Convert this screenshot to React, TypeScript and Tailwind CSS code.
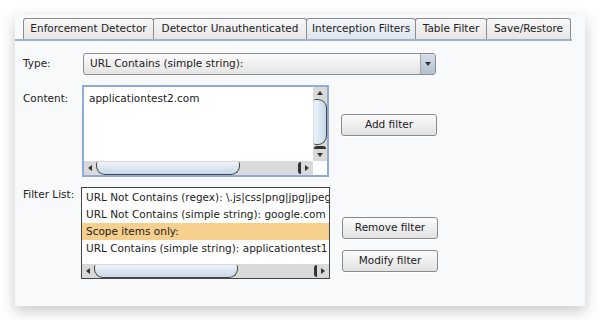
const TABS = [
  { label: 'Enforcement Detector', w: 'w-[131px]' },
  { label: 'Detector Unauthenticated', w: 'w-[154px]' },
  { label: 'Interception Filters', w: 'w-[110px]', active: true },
  { label: 'Table Filter', w: 'w-[72px]' },
  { label: 'Save/Restore', w: 'w-[85px]' },
];

const FILTERS = [
  'URL Not Contains (regex): \\.js|css|png|jpg|jpeg',
  'URL Not Contains (simple string): google.com',
  'Scope items only:',
  'URL Contains (simple string): applicationtest1',
];

function Arrow({ dir }: { dir: 'up' | 'down' | 'left' | 'right' }) {
  const pts = {
    up: '0,5 3,1 6,5',
    down: '0,1 3,5 6,1',
    left: '5,0 1,3 5,6',
    right: '1,0 5,3 1,6',
  }[dir];
  return (
    <svg width="6" height="6" viewBox="0 0 6 6" className="shrink-0">
      <polygon points={pts} fill="#333" />
    </svg>
  );
}

function HScroll({ corner }: { corner?: boolean }) {
  return (
    <div className="flex h-[14px]">
      <div className="flex-1 flex items-center bg-[#d9d9d9]">
        <div className="w-[12px] flex justify-center">
          <Arrow dir="left" />
        </div>
        <div className="w-[144px] h-[13px] rounded-b-[9px] rounded-t-[2px] border-x border-b border-[#444] bg-gradient-to-b from-[#eef3f9] to-[#c8d8ea]" />
        <div className="flex-1" />
        <div className="w-[3px] h-[12px] rounded-l-full bg-[#333]" />
        <div className="w-[12px] flex justify-center">
          <Arrow dir="right" />
        </div>
      </div>
      {corner && <div className="w-[14px] bg-white" />}
    </div>
  );
}

function VScroll() {
  return (
    <div className="w-[14px] flex flex-col items-center bg-[#d9d9d9]">
      <div className="h-[12px] flex items-center">
        <Arrow dir="up" />
      </div>
      <div className="w-[13px] h-[46px] rounded-r-[9px] rounded-l-[2px] border-y border-r border-[#444] bg-gradient-to-r from-[#eef3f9] to-[#c8d8ea]" />
      <div className="flex-1" />
      <div className="w-[12px] h-[3px] rounded-t-full bg-[#333]" />
      <div className="h-[12px] flex items-center">
        <Arrow dir="down" />
      </div>
    </div>
  );
}

function Button({ children }: { children: string }) {
  return (
    <button className="w-[96px] h-[22px] rounded-[3px] border border-[#8a8a8a] bg-gradient-to-b from-[#fbfbfb] to-[#e2e2e2] text-[#222] text-[10.5px] shadow-[0_1px_0_#fff]">
      {children}
    </button>
  );
}

export default function App() {
  return (
    <div className="w-[600px] h-[320px] bg-white pt-[15px] px-[15px]">
      <div
        className="w-[570px] h-[291px] bg-[#f8f9fa] shadow-[0_5px_14px_rgba(0,0,0,0.22)] text-[#222] text-[10.5px]"
        style={{ fontFamily: '"DejaVu Sans", sans-serif' }}
      >
        {/* Tab strip */}
        <div className="pt-[3px]">
          <div className="flex pl-[8px]">
            {TABS.map((t) => (
              <div
                key={t.label}
                className={`${t.w} h-[21px] -mr-px flex items-center justify-center rounded-t-[3px] border border-b-0 border-[#8c8c8c] ${
                  t.active ? 'bg-gradient-to-b from-[#f3f6fa] to-[#dde4ee]' : 'bg-gradient-to-b from-[#f7f7f7] to-[#e6e6e6]'
                }`}
              >
                {t.label}
              </div>
            ))}
          </div>
          <div className="h-[2px] w-[557px] bg-[#9fb0c6]" />
        </div>

        {/* Form */}
        <div className="pl-[8px] pt-[12px] flex flex-col">
          {/* Type */}
          <div className="flex items-center h-[22px]">
            <div className="w-[60px]">Type:</div>
            <div className="w-[353px] h-[22px] flex rounded-[3px] border border-[#8c8c8c] bg-gradient-to-b from-[#fcfcfc] to-[#e4e4e4] overflow-hidden">
              <div className="flex-1 flex items-center pl-[6px]">URL Contains (simple string):</div>
              <div className="w-[15px] flex items-center justify-center bg-gradient-to-b from-[#d6dee9] to-[#b4c0d1] border-l border-[#a0a8b4]">
                <Arrow dir="down" />
              </div>
            </div>
          </div>

          {/* Content */}
          <div className="flex mt-[10px]">
            <div className="w-[59px] pt-[6px]">Content:</div>
            <div className="w-[247px] h-[92px] border-2 border-[#8fabd6] bg-white flex flex-col">
              <div className="flex flex-1">
                <div className="flex-1 pl-[5px] pt-[4px]">applicationtest2.com</div>
                <VScroll />
              </div>
              <HScroll corner />
            </div>
            <div className="pl-[12px] pt-[29px]">
              <Button>Add filter</Button>
            </div>
          </div>

          {/* Filter List */}
          <div className="flex mt-[10px]">
            <div className="w-[58px]">Filter List:</div>
            <div className="w-[249px] h-[92px] border border-[#444] bg-white flex flex-col">
              <div className="flex-1 pt-px overflow-hidden">
                {FILTERS.map((f, i) => (
                  <div
                    key={f}
                    className={`h-[17px] pl-[4px] flex items-center whitespace-nowrap ${i === 2 ? 'bg-[#f6cf8c]' : ''}`}
                  >
                    {f}
                  </div>
                ))}
              </div>
              <HScroll />
            </div>
            <div className="pl-[12px] pt-[30px] flex flex-col gap-[11px]">
              <Button>Remove filter</Button>
              <Button>Modify filter</Button>
            </div>
          </div>
        </div>
      </div>
    </div>
  );
}
